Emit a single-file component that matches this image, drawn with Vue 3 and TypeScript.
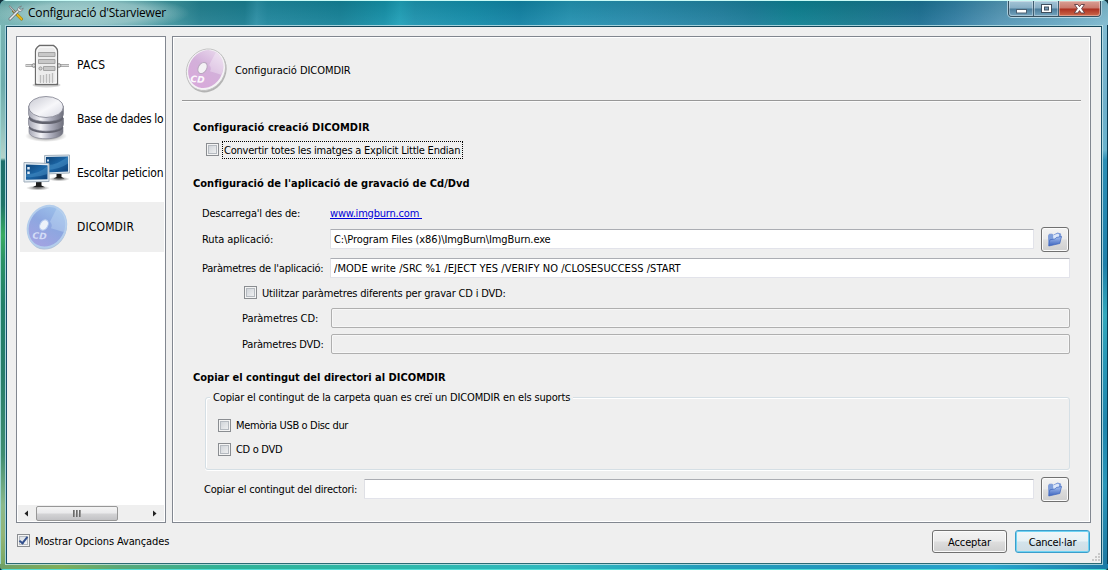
<script setup lang="ts">
import { ref } from 'vue'

interface Section {
  id: string
  label: string
  cls: string
}

const sections: Section[] = [
  { id: 'server', label: 'PACS', cls: 't-pacs' },
  { id: 'database', label: 'Base de dades lo', cls: 't-base' },
  { id: 'screens', label: 'Escoltar peticion', cls: 't-escoltar' },
  { id: 'disc', label: 'DICOMDIR', cls: 't-dicom' },
]
const selected = ref('disc')

const explicitEndian = ref(false)
const differentParams = ref(false)
const toUsb = ref(false)
const toDisc = ref(false)
const advanced = ref(true)
const appPath = ref('C:\\Program Files (x86)\\ImgBurn\\ImgBurn.exe')
const appParams = ref('/MODE write /SRC %1 /EJECT YES /VERIFY NO /CLOSESUCCESS /START')
const copyPath = ref('')
</script>

<template>
  <svg class="defs" width="0" height="0">
    <defs>
      <linearGradient id="metal" x1="0" x2="1" y1="0" y2="0">
        <stop offset="0" stop-color="#a6a7b4" /><stop offset=".35" stop-color="#f4f4f8" />
        <stop offset=".6" stop-color="#b5b6c4" /><stop offset="1" stop-color="#6e6f7c" />
      </linearGradient>
      <linearGradient id="metalTop" x1="0" x2="1" y1="0" y2="1">
        <stop offset="0" stop-color="#c8c9d2" /><stop offset=".55" stop-color="#f7f7fa" />
        <stop offset="1" stop-color="#d5d6e0" />
      </linearGradient>
      <linearGradient id="screen" x1="0" x2="1" y1="0" y2="1">
        <stop offset="0" stop-color="#0f4478" /><stop offset=".5" stop-color="#1c66a6" />
        <stop offset="1" stop-color="#0d3f77" />
      </linearGradient>
      <linearGradient id="lilac" x1="0" x2="0" y1="0" y2="1">
        <stop offset="0" stop-color="#e6d3ea" /><stop offset=".45" stop-color="#d3b0da" />
        <stop offset="1" stop-color="#d8a9da" />
      </linearGradient>
      <linearGradient id="blueDisc" x1="0" x2="0" y1="0" y2="1">
        <stop offset="0" stop-color="#9cc0ea" /><stop offset=".45" stop-color="#8da7e0" />
        <stop offset="1" stop-color="#a3a3e2" />
      </linearGradient>
      <linearGradient id="folder" x1="0" x2="0" y1="0" y2="1">
        <stop offset="0" stop-color="#a9c3f2" /><stop offset="1" stop-color="#3c63bd" />
      </linearGradient>
      <radialGradient id="shade">
        <stop offset="0" stop-color="#222" stop-opacity=".75" />
        <stop offset="1" stop-color="#555" stop-opacity="0" />
      </radialGradient>
      <symbol id="i-folder" viewBox="0 0 16 16">
        <path d="M1.800 14.500L1.500 4.500l.8-1.300h3l1 1L10.500 2l3 .8.5 4z" fill="#7f9fdc" stroke="#7393d4" stroke-width=".8" />
        <path d="M6 4.500l4.500-1.800 1.500.5v3.300l-5.500 2z" fill="#dce7fa" />
        <path d="M1.800 15L2.800 8.800l5-.8 1.500-1.500 5.200-1L12.800 12.500z" fill="url(#folder)" stroke="#3f66bb" stroke-width=".7" />
      </symbol>
    </defs>
  </svg>

  <div class="window">
    <header class="titlebar">
      <svg class="app-icon" width="16" height="16" viewBox="0 0 16 16">
        <path d="M5.500 6L13.500 14" stroke="#8a6d10" stroke-width="3" stroke-linecap="round" />
        <path d="M9.500 10L13.500 14" stroke="#e3b71b" stroke-width="2.200" stroke-linecap="round" />
        <path d="M1 1.500l1-.8L7.500 7 6.500 8z" fill="#c9cdd0" stroke="#666" stroke-width=".6" />
        <path d="M2 14L10.500 5.500" stroke="#6d7478" stroke-width="3" stroke-linecap="round" />
        <path d="M2 14L10.500 5.500" stroke="#e9edee" stroke-width="1.500" stroke-linecap="round" />
        <path d="M13.500 1.200L11 1.800 9.500 4l.6 2 2 .6 2.300-1.300.8-2.300-2 1.500-1.500-.5-.2-1.400z" fill="#e4e8e9" stroke="#70777a" stroke-width=".7" />
      </svg>
      <span class="caption">Configuració d'Starviewer</span>
      <div class="controls">
        <button class="ctl min" aria-label="Minimitza">
          <svg width="24" height="16"><rect x="7.500" y="8.500" width="10" height="3.500" fill="#fff" stroke="#4b6072" /></svg>
        </button>
        <button class="ctl max" aria-label="Maximitza">
          <svg width="24" height="16">
            <rect x="7.500" y="3.500" width="10" height="8" fill="#fff" stroke="#41505f" />
            <rect x="10.500" y="6" width="4" height="3" fill="#7699b4" stroke="#41505f" />
          </svg>
        </button>
        <button class="ctl close" aria-label="Tanca">
          <svg width="41" height="16">
            <path d="M15.500 3.500h3.300l1.700 2.200 1.700-2.200h3.300l-2.900 4.100 3.100 4.400h-3.500l-1.700-2.400-1.700 2.400h-3.500l3.100-4.400z" fill="#fff" stroke="#5b3a3f" stroke-width=".9" />
          </svg>
        </button>
      </div>
    </header>

    <div class="edge left"></div>
    <main class="client">
      <div class="panes">
        <nav class="sidebar">
          <ul class="sections">
            <li
              v-for="s in sections"
              :key="s.id"
              class="section"
              :class="{ active: s.id === selected }"
              @click="selected = s.id"
            >
              <svg v-if="s.id === 'server'" class="sec-icon" viewBox="0 0 48 48">
                <ellipse cx="23.500" cy="44" rx="14" ry="2.500" fill="#bbb" opacity=".6" />
                <path d="M2.500 24.500h43.500" stroke="#8f8f8f" stroke-width="2.600" />
                <path d="M2.500 24.500h43.500" stroke="#e4e4e4" stroke-width=".9" />
                <circle cx="10.800" cy="24.500" r="1.800" fill="#ddd" stroke="#888" /><circle cx="36" cy="24.500" r="1.800" fill="#ddd" stroke="#888" />
                <path d="M12.500 43.500V10q0-2 2-4l2-1.500h14l2 1.500q2 2 2 4v33.500z" fill="#ececec" stroke="#6b6b6b" stroke-width="1.300" />
                <path d="M13.800 42V11q0-3 3.200-5h13q3.200 2 3.200 5v31z" fill="none" stroke="#fff" />
                <path d="M15.500 11.500H32v4H15.500zM15.500 18.500H32v4H15.500zM20.500 25.500H32v4H20.500z" fill="#c8c8c8" stroke="#a3a3a3" />
                <circle cx="17.500" cy="27.500" r="1.600" fill="#d0d0d0" stroke="#8d8d8d" stroke-width=".8" />
                <path d="M17.500 34v8M20.500 34v8M23.500 33v9M26.500 33v9M29.500 32v10" stroke="#bcbcbc" stroke-width="1.300" />
              </svg>
              <svg v-else-if="s.id === 'database'" class="sec-icon" viewBox="0 0 48 48">
                <ellipse cx="23" cy="41" rx="21" ry="6" fill="url(#shade)" />
                <path d="M6 32v5c0 9 34 9 34 0v-5z" fill="url(#metal)" stroke="#777886" stroke-width=".6" />
                <path d="M6 32c0 8 34 8 34 0v-2H6z" fill="#62636f" />
                <path d="M5.500 23v6c0 9.500 35 9.500 35 0v-6z" fill="url(#metal)" stroke="#777886" stroke-width=".6" />
                <path d="M6 23c0 8 34 8 34 0v-2H6z" fill="#62636f" />
                <path d="M5.500 11v8c0 10 35 10 35 0v-8z" fill="url(#metal)" stroke="#777886" stroke-width=".6" />
                <ellipse cx="23" cy="12" rx="17.300" ry="10.500" fill="url(#metalTop)" stroke="#8b8c99" stroke-width=".9" />
              </svg>
              <svg v-else-if="s.id === 'screens'" class="sec-icon lowered" viewBox="0 0 48 48">
                <ellipse cx="36" cy="29" rx="11" ry="2.300" fill="url(#shade)" />
                <path d="M33.500 24h5v3l3 1.500h-11l3-1.500z" fill="#1c1c1c" />
                <path d="M21.500 5.500l25-.5v18l-24.500 1z" fill="#dce6ee" stroke="#a7b4c0" />
                <path d="M23 7l22-.4v14.900L23 22.500z" fill="url(#screen)" />
                <path d="M23 15q10 1 22-8.400v7Q36 20 23 20z" fill="#4a91c8" opacity=".5" />
                <path d="M25 9.500v6" stroke="#cde" stroke-width="2" stroke-dasharray="2 1.500" />
                <ellipse cx="15" cy="38" rx="12" ry="2.500" fill="url(#shade)" />
                <path d="M13 32h5.500v3.500l3.500 1.800H9.500l3.500-1.800z" fill="#1c1c1c" />
                <path d="M1 12.500l25 1v18L1 32z" fill="#e4edf4" stroke="#9fadba" />
                <path d="M3 14.500l21.500.8v14L3 29.800z" fill="url(#screen)" />
                <path d="M3 24q11 1 21.500-8v8Q14 28 3 27z" fill="#4a91c8" opacity=".5" />
                <path d="M5.500 17v9" stroke="#e3eef8" stroke-width="2.500" stroke-dasharray="2.500 2" />
              </svg>
              <svg v-else class="sec-icon" viewBox="0 0 48 48">
                <g transform="rotate(30 24 24)">
                  <ellipse cx="25" cy="25" rx="18.800" ry="22" fill="#7d9cc4" opacity=".55" />
                  <ellipse cx="23.800" cy="23.800" rx="18.500" ry="21.500" fill="url(#blueDisc)" stroke="#b3cdec" stroke-width="2" />
                  <path d="M23 2.500Q39 3 41 20L28 23q0-4-4-5z" fill="#c5dcf5" opacity=".4" />
                </g>
                <ellipse cx="21" cy="22" rx="3.800" ry="5.500" transform="rotate(30 21 22)" fill="#eef3fa" stroke="#b8cdf0" />
                <text x="9.500" y="36" class="cd-text blue" transform="rotate(4 17 33)">CD</text>
              </svg>
              <span class="sec-label" :class="s.cls">{{ s.label }}</span>
            </li>
          </ul>
          <div class="scrollbar">
            <span class="arrow first-arrow"><svg width="4" height="7"><path d="M4 .5L.5 3.500 4 6.500z" fill="#222" /></svg></span>
            <span class="thumb"><i></i><i></i><i></i></span>
            <span class="rest"></span>
            <span class="arrow"><svg width="4" height="7"><path d="M0 .5L3.500 3.500 0 6.500z" fill="#222" /></svg></span>
          </div>
        </nav>

        <section class="page">
          <header class="page-head">
            <svg class="head-icon" viewBox="0 0 44 46">
              <g transform="rotate(32 22 23)">
                <ellipse cx="23.300" cy="23.600" rx="19" ry="22" fill="#777" opacity=".5" />
                <ellipse cx="21.800" cy="22.800" rx="18.800" ry="21.500" fill="#f4f2f5" stroke="#bdbdbd" stroke-width=".8" />
                <ellipse cx="21.300" cy="22.300" rx="16.800" ry="19.700" fill="url(#lilac)" />
                <path d="M21 2.800Q35 3.300 37.500 19L26 22q0-4-4-5z" fill="#fff" opacity=".3" />
              </g>
              <ellipse cx="18.500" cy="21" rx="4.200" ry="6" transform="rotate(30 18.500 21)" fill="#f4f2f5" stroke="#b9a6bf" />
              <text x="6.500" y="35.500" class="cd-text" transform="rotate(3 14 32)">CD</text>
            </svg>
            <span class="t-head">Configuració DICOMDIR</span>
          </header>

          <h2 class="heading first t-h1">Configuració creació DICOMDIR</h2>
          <label class="check row-endian">
            <input v-model="explicitEndian" type="checkbox" /><span class="focus"><span class="t-conv">Convertir totes les imatges a Explicit Little Endian</span></span>
          </label>

          <h2 class="heading second t-h2">Configuració de l'aplicació de gravació de Cd/Dvd</h2>
          <div class="row download">
            <span class="label t-desc">Descarrega'l des de:</span>
            <a class="link t-link">www.imgburn.com&nbsp;</a>
          </div>
          <div class="row path">
            <span class="label t-ruta">Ruta aplicació:</span>
            <input v-model="appPath" class="field t-path" />
            <button class="browse" aria-label="Obre"><svg width="16" height="16"><use href="#i-folder" /></svg></button>
          </div>
          <div class="row params">
            <span class="label t-param">Paràmetres de l'aplicació:</span>
            <input v-model="appParams" class="field t-mode" />
          </div>
          <label class="check row-diff">
            <input v-model="differentParams" type="checkbox" /><span class="t-util">Utilitzar paràmetres diferents per gravar CD i DVD:</span>
          </label>
          <div class="row sub">
            <span class="label t-pcd">Paràmetres CD:</span>
            <input class="field" disabled />
          </div>
          <div class="row sub">
            <span class="label t-pdvd">Paràmetres DVD:</span>
            <input class="field" disabled />
          </div>

          <h2 class="heading third t-h3">Copiar el contingut del directori al DICOMDIR</h2>
          <fieldset class="group">
            <legend><span class="t-legend">Copiar el contingut de la carpeta quan es creï un DICOMDIR en els suports</span></legend>
            <label class="check"><input v-model="toUsb" type="checkbox" /><span class="t-usb">Memòria USB o Disc dur</span></label>
            <label class="check"><input v-model="toDisc" type="checkbox" /><span class="t-cd">CD o DVD</span></label>
          </fieldset>
          <div class="row copy">
            <span class="label t-copy">Copiar el contingut del directori:</span>
            <input v-model="copyPath" class="field" />
            <button class="browse" aria-label="Obre"><svg width="16" height="16"><use href="#i-folder" /></svg></button>
          </div>
        </section>
      </div>

      <footer class="footer">
        <label class="check"><input v-model="advanced" type="checkbox" /><span class="t-adv">Mostrar Opcions Avançades</span></label>
        <div class="actions">
          <button class="push"><span class="t-ok">Acceptar</span></button>
          <button class="push default"><span class="t-cancel">Cancel·lar</span></button>
        </div>
        <svg class="grip" width="9" height="9">
          <path d="M7 0h2v2H7zM4 3h2v2H4zM7 3h2v2H7zM1 6h2v2H1zM4 6h2v2H4zM7 6h2v2H7z" fill="#c8c8c8" />
        </svg>
      </footer>
    </main>
    <div class="edge right"></div>
    <div class="edge bottom"></div>
  </div>
</template>

<style>
body { margin: 0; background: #10303a; overflow: hidden; }
</style>

<style scoped>
* { box-sizing: border-box; }
.defs { position: absolute; }
.window {
  width: 1108px; height: 570px;
  display: grid; grid-template: 25px 539px 6px / 5px 1097px 6px;
  border-radius: 6px 6px 4px 4px; overflow: hidden;
  font: 11px/14px "DejaVu Sans Condensed", "DejaVu Sans", sans-serif; font-stretch: condensed;
  color: #000; background: #2a8fb0;
}
.titlebar {
  grid-column: 1 / 4; display: flex; align-items: flex-start;
  border-top: 1px solid #c9fbf6; padding-left: 8px;
  background:
    radial-gradient(ellipse 100px 18px at 90px 12px, rgba(190, 222, 221, .7) 0, rgba(180, 214, 214, .6) 60%, rgba(150, 200, 203, 0) 100%),
    linear-gradient(to bottom, rgba(0, 60, 50, .12), rgba(255, 255, 255, .06)),
    linear-gradient(92deg, #74b3b3 0, #62abaf 90px, #3c919c 175px, #237f90 200px, #1a7c90 245px, #2c8fa6 257px, #1f869d 268px, #148097 340px, #1590a9 385px, #20a0b9 400px, #1d93af 415px, #138caa 470px, #1181a4 520px, #2391b1 570px, #2689ab 640px, #217f9f 720px, #1a7b98 752px, #0d7f91 795px, #14788d 850px, #1c6f93 920px, #317da3 955px, #5495b5 1000px, #68a7c3 1060px, #7fb9cf 1108px);
}
.app-icon { margin: 4px 4px 0 0; }
.caption { font: 12px/24px "Open Sans", "Noto Sans", sans-serif; letter-spacing: -.2px; white-space: nowrap; }
.controls {
  display: flex; margin-left: auto; margin-right: 7px; height: 16px;
  border: 1px solid #36505f; border-top: 0; border-radius: 0 0 4px 4px; box-shadow: 0 1px 0 #b4d6e4, 1px 0 0 #a9ccdb, -1px 0 0 #a9ccdb;
}
.ctl { height: 15px; padding: 0; border: 0; overflow: hidden; box-shadow: inset 0 0 0 1px rgba(255, 255, 255, .35); }
.ctl svg { display: block; }
.min, .max { width: 25px; border-right: 1px solid #3f5d70; background: linear-gradient(#a5c5d7 0, #86adc4 48%, #4b7c9a 52%, #75a5bf 100%); }
.min { border-bottom-left-radius: 3px; }
.close { width: 41px; border-bottom-right-radius: 3px; background: linear-gradient(#d9a095 0, #c9786b 48%, #ab2f20 52%, #cd6a4c 100%); }

.edge.left {
  border-left: 1px solid #9bd6d3;
  background: linear-gradient(#78b4b3 0, #6fadac 60px, #8dc0bb 100px, #b4d3ca 133px, #1d6f6b 136px, #1f7467 180px, #38ac62 210px, #2a9265 235px, #217f68 280px, #277d69 350px, #3f8d70 430px, #8bb98a 480px, #93b576 510px, #79a863 539px);
}
.edge.right {
  border-right: 1px solid #0c3b52;
  background: linear-gradient(#82bcd2 0, #6fb0cb 80px, #69b3cd 125px, #2b8fb6 135px, #1f80aa 240px, #33a9bd 290px, #2a9ab8 330px, #1f86ad 400px, #2a97ba 460px, #1e79a2 539px);
}
.edge.bottom {
  grid-column: 1 / 4; border-bottom: 1px solid #52e0d8;
  background: linear-gradient(to right, #6f9f66 0, #7fae5b 60px, #59a877 120px, #2fb296 220px, #2db8ab 400px, #2fb9c0 560px, #229dbb 700px, #2296bd 850px, #27a6cf 990px, #1b7ba6 1108px);
}

.client {
  position: relative; background: #efefef; padding: 10px 9px 0 9px; display: flex; flex-direction: column;
  border: 1px solid #15506a; border-top-color: #16485c; border-bottom-color: #2b6b74;
  box-shadow: 0 0 0 1px rgba(205, 232, 235, .75);
  z-index: 1; margin: 1px 0 0 1px; width: 1096px;
}
.panes { display: flex; gap: 6px; height: 487px; margin-top: -1px; }

.sidebar { width: 150px; border: 1px solid #828790; background: #fff; padding: 1px; display: flex; flex-direction: column; }
.sections { list-style: none; margin: 0; padding: 2px 0 0 2px; flex: 1; overflow: hidden; }
.section { height: 50px; margin-bottom: 4px; display: flex; align-items: center; width: 144px; }
.section.active { background: #efefef; }
.sec-icon { width: 48px; height: 48px; margin-left: 3px; flex: none; }
.sec-icon.lowered { margin-top: 2px; }
.sec-label { margin-left: 6px; font: 12px/16px "DejaVu Sans Condensed", "DejaVu Sans", sans-serif; font-stretch: condensed; white-space: nowrap; }
.cd-text { font: italic bold 9px "DejaVu Sans", sans-serif; fill: #fbf7fc; }
.cd-text.blue { fill: #d3dcf6; }
.scrollbar { height: 16px; display: flex; align-items: center; background: #efefef; }
.arrow { width: 18px; display: flex; align-items: center; justify-content: center; }
.first-arrow { padding-right: 3px; }
.thumb {
  width: 82px; height: 15px; border: 1px solid #979797; border-radius: 2px; display: flex; align-items: center; justify-content: center; gap: 1px;
  background: linear-gradient(#f4f4f4 0, #e9e9eb 48%, #d4d4d6 52%, #c2c2c5 100%);
}
.thumb i { width: 2px; height: 7px; background: linear-gradient(to right, #555, #aaa); }
.rest { flex: 1; }

.page { width: 919px; border: 1px solid #828790; box-shadow: inset 1px 1px 0 #fff, inset -1px -1px 0 #fff; display: flex; flex-direction: column; }
.page-head {
  margin: 0 9px; height: 64px; display: flex; align-items: center; padding: 3px 0 0 2px; flex: none;
  border-bottom: 1px solid #989898; box-shadow: 0 1px 0 #fafafa;
}
.head-icon { width: 44px; height: 46px; margin-right: 7px; overflow: visible; }
.t-head { padding-top: 2px; }

.heading { margin: 0 0 0 20px; padding-top: 1px; height: 20px; font: bold 11px/20px "DejaVu Sans Condensed", "DejaVu Sans", sans-serif; font-stretch: condensed; white-space: nowrap; flex: none; }
.first { margin-top: 16px; }
.second { margin-top: 13px; }
.third { margin-top: 13px; }

.check { display: flex; align-items: center; white-space: nowrap; flex: none; }
.check input {
  appearance: none; width: 13px; height: 13px; margin: 0 5px 2px 0; flex: none;
  border: 1px solid #8a8d91; box-shadow: inset 0 0 0 1px #f4f4f4, inset 0 0 0 2px #b5bac0;
  background: linear-gradient(135deg, #c9ced4, #f6f6f6);
}
.check input:checked {
  background: linear-gradient(135deg, #d5dae0, #fafafa);
  position: relative;
}
.check input:checked::after {
  content: ""; position: absolute; left: 3px; top: 0; width: 3px; height: 7px;
  border: solid #33508d; border-width: 0 2px 2px 0; transform: rotate(38deg);
}
.row-endian { height: 20px; margin: 3px 0 0 33px; }
.row-endian input { margin-right: 3px; }
.focus { border: 1px dotted #000; height: 18px; width: 241px; padding-left: 1px; line-height: 17px; }

.row { display: flex; align-items: center; margin-right: 20px; flex: none; white-space: nowrap; }
.path, .copy { margin-right: 21px; }
.label, .link { flex: none; padding-top: 2px; }
.field {
  flex: 1; min-width: 0; height: 20px; border: 1px solid #e2e3ea; border-top-color: #abadb3; border-left-color: #dfe0e5; border-radius: 1px;
  padding: 0 0 0 3px; margin: 0; font: inherit; color: #000; background: #fff; outline: 0;
}
.field:disabled { border-color: #afafaf; background: #efefef; box-shadow: inset 0 0 0 1px #f7f7f7; border-radius: 2px; }
.download { height: 20px; margin-top: 10px; padding-left: 29px; }
.download .label, .path .label, .params .label { width: 128px; }
.link { color: #0000d8; text-decoration: underline; }
.path { height: 24px; margin-top: 4px; padding-left: 29px; }
.params { height: 24px; margin-top: 5px; padding-left: 29px; }
.row-diff { height: 20px; margin: 3px 0 0 71px; }
.row-diff span { padding-top: 2px; }
.sub { height: 20px; margin-top: 5px; padding-left: 69px; }
.sub + .sub { margin-top: 6px; }
.sub .label { width: 89px; }
.browse, .push {
  border: 1px solid #707070; border-radius: 3px; padding: 0; font: inherit; color: #000;
  background: linear-gradient(#f3f3f3 0, #ebebeb 48%, #dddddd 52%, #cfcfcf 100%); box-shadow: inset 0 0 0 1px #fbfbfb;
}
.browse { width: 28px; height: 25px; margin-left: 7px; display: flex; align-items: center; justify-content: center; flex: none; }

.group {
  position: relative; margin: 10px 20px 0 32px; height: 73px; padding: 16px 0 0 12px; min-width: 0;
  border: 1px solid #d5dfe5; border-radius: 3px; box-shadow: inset 1px 1px 0 #fff, 0 1px 0 #fff; flex: none;
}
.group legend { position: absolute; left: 4px; top: -8px; padding: 0 3px; line-height: 16px; background: #efefef; white-space: nowrap; }
.group .check { height: 24px; }
.copy { height: 24px; margin-top: 7px; padding-left: 31px; }
.copy .label { width: 160px; }

.footer { display: flex; align-items: flex-start; padding: 7px 2px 0 1px; height: 40px; }
.footer > .check { height: 23px; }
.actions { margin-left: auto; display: flex; gap: 8px; }
.push { width: 75px; height: 23px; white-space: nowrap; }
.push span { position: relative; top: 1px; }
.push.default { border-color: #3c9ecb; box-shadow: inset 0 0 0 1px #6fd3f3; background: linear-gradient(#f0f6f9 0, #e6f1f5 48%, #d3e4ec 52%, #cfdde4 100%); }
.grip { position: absolute; right: 1px; bottom: 1px; }

.t-pacs { letter-spacing: .25px; }
.t-base { letter-spacing: -.38px; }
.t-escoltar { letter-spacing: -.2px; }
.t-dicom { letter-spacing: .15px; }
.t-head { letter-spacing: -.05px; }
.t-h1 { letter-spacing: .07px; }
.t-h2 { letter-spacing: .02px; }
.t-conv { letter-spacing: -.22px; }
.t-desc { letter-spacing: -.17px; }
.t-link { letter-spacing: -.2px; }
.t-ruta { letter-spacing: -.1px; }
.t-param { letter-spacing: -.23px; }
.t-path { letter-spacing: -.1px; }
.t-mode { letter-spacing: .04px; }
.t-util { letter-spacing: -.18px; }
.t-pcd { letter-spacing: -.08px; }
.t-pdvd { letter-spacing: -.2px; }
.t-legend { letter-spacing: -.165px; }
.t-usb { letter-spacing: -.35px; }
.t-cd { letter-spacing: -.3px; }
.t-copy { letter-spacing: -.21px; }
.t-adv { letter-spacing: -.12px; }
.t-ok { letter-spacing: -.12px; }
.t-cancel { letter-spacing: -.2px; }
</style>
